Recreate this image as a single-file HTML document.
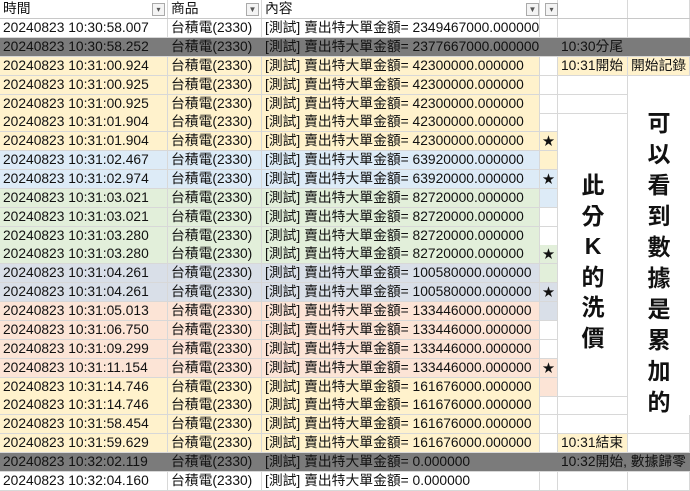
<!DOCTYPE html>
<html><head><meta charset="utf-8"><style>
*{margin:0;padding:0;box-sizing:border-box}
body{width:690px;height:491px;background:#fff;position:relative;overflow:hidden;font-family:"Liberation Sans","Noto Sans CJK TC",sans-serif;font-size:13.8px;color:#111}
.r{position:absolute;left:0;width:690px;height:19px;border-bottom:1px solid #d8d8d8}
.c{position:absolute;top:0;height:100%;line-height:18px;white-space:nowrap;border-right:1px solid #d8d8d8;padding-left:3px}
.a{left:0;width:168px}.b{left:168px;width:94px}.cc{left:262px;width:278px}.d{left:540px;width:18px;text-align:center;padding:0;font-size:12px}.e{left:558px;width:70px}.f{left:628px;width:62px}
.Y{background:#fff2cc}.B{background:#ddebf7}.G{background:#e2efda}.GB{background:#d9dfe8}.P{background:#fce4d6}.K{background:#7b7b7b;border-right-color:#7b7b7b}
.big{position:absolute;font-weight:bold;font-size:23px;text-align:center;line-height:30.5px;color:#111}
.fb{position:absolute;top:3px;width:13px;height:13px;border:1px solid #aaa;background:#f4f4f4;font-size:8px;line-height:11px;text-align:center;color:#555}
</style></head><body>
<div class="r" style="top:0;height:19px;border-bottom:1px solid #c8c8c8">
<div class="c a">時間</div><div class="c b">商品</div><div class="c cc">內容</div><div class="c d"></div><div class="c e"></div><div class="c f"></div>
<span class="fb" style="left:152px">▾</span><span class="fb" style="left:246px">▼</span><span class="fb" style="left:526px">▼</span><span class="fb" style="left:545px">▾</span>
</div>
<div class="r" style="top:19px"><div class="c a">20240823 10:30:58.007</div><div class="c b">台積電(2330)</div><div class="c cc">[測試] 賣出特大單金額= 2349467000.000000</div><div class="c d"></div><div class="c e"></div><div class="c f"></div></div>
<div class="r K" style="top:38px"><div class="c a K">20240823 10:30:58.252</div><div class="c b K">台積電(2330)</div><div class="c cc K">[測試] 賣出特大單金額= 2377667000.000000</div><div class="c d K"></div><div class="c e K" style="width:132px">10:30分尾</div></div>
<div class="r" style="top:57px"><div class="c a Y">20240823 10:31:00.924</div><div class="c b Y">台積電(2330)</div><div class="c cc Y">[測試] 賣出特大單金額= 42300000.000000</div><div class="c d"></div><div class="c e Y">10:31開始</div><div class="c f Y">開始記錄</div></div>
<div class="r" style="top:75.6px"><div class="c a Y">20240823 10:31:00.925</div><div class="c b Y">台積電(2330)</div><div class="c cc Y">[測試] 賣出特大單金額= 42300000.000000</div><div class="c d"></div><div class="c e"></div><div class="c f"></div></div>
<div class="r" style="top:94.5px"><div class="c a Y">20240823 10:31:00.925</div><div class="c b Y">台積電(2330)</div><div class="c cc Y">[測試] 賣出特大單金額= 42300000.000000</div><div class="c d"></div><div class="c e"></div><div class="c f" style="border-bottom:none"></div></div>
<div class="r" style="top:113.4px"><div class="c a Y">20240823 10:31:01.904</div><div class="c b Y">台積電(2330)</div><div class="c cc Y">[測試] 賣出特大單金額= 42300000.000000</div><div class="c d"></div><div class="c e"></div></div>
<div class="r" style="top:132.2px"><div class="c a Y">20240823 10:31:01.904</div><div class="c b Y">台積電(2330)</div><div class="c cc Y">[測試] 賣出特大單金額= 42300000.000000</div><div class="c d Y">★</div></div>
<div class="r" style="top:151.1px"><div class="c a B">20240823 10:31:02.467</div><div class="c b B">台積電(2330)</div><div class="c cc B">[測試] 賣出特大單金額= 63920000.000000</div><div class="c d Y"></div></div>
<div class="r" style="top:170px"><div class="c a B">20240823 10:31:02.974</div><div class="c b B">台積電(2330)</div><div class="c cc B">[測試] 賣出特大單金額= 63920000.000000</div><div class="c d B">★</div></div>
<div class="r" style="top:188.8px"><div class="c a G">20240823 10:31:03.021</div><div class="c b G">台積電(2330)</div><div class="c cc G">[測試] 賣出特大單金額= 82720000.000000</div><div class="c d B"></div></div>
<div class="r" style="top:207.7px"><div class="c a G">20240823 10:31:03.021</div><div class="c b G">台積電(2330)</div><div class="c cc G">[測試] 賣出特大單金額= 82720000.000000</div><div class="c d"></div></div>
<div class="r" style="top:226.6px"><div class="c a G">20240823 10:31:03.280</div><div class="c b G">台積電(2330)</div><div class="c cc G">[測試] 賣出特大單金額= 82720000.000000</div><div class="c d"></div></div>
<div class="r" style="top:245.4px"><div class="c a G">20240823 10:31:03.280</div><div class="c b G">台積電(2330)</div><div class="c cc G">[測試] 賣出特大單金額= 82720000.000000</div><div class="c d G">★</div></div>
<div class="r" style="top:264.3px"><div class="c a GB">20240823 10:31:04.261</div><div class="c b GB">台積電(2330)</div><div class="c cc GB">[測試] 賣出特大單金額= 100580000.000000</div><div class="c d G"></div></div>
<div class="r" style="top:283.2px"><div class="c a GB">20240823 10:31:04.261</div><div class="c b GB">台積電(2330)</div><div class="c cc GB">[測試] 賣出特大單金額= 100580000.000000</div><div class="c d GB">★</div></div>
<div class="r" style="top:302px"><div class="c a P">20240823 10:31:05.013</div><div class="c b P">台積電(2330)</div><div class="c cc P">[測試] 賣出特大單金額= 133446000.000000</div><div class="c d GB"></div></div>
<div class="r" style="top:320.9px"><div class="c a P">20240823 10:31:06.750</div><div class="c b P">台積電(2330)</div><div class="c cc P">[測試] 賣出特大單金額= 133446000.000000</div><div class="c d"></div></div>
<div class="r" style="top:339.8px"><div class="c a P">20240823 10:31:09.299</div><div class="c b P">台積電(2330)</div><div class="c cc P">[測試] 賣出特大單金額= 133446000.000000</div><div class="c d"></div></div>
<div class="r" style="top:358.6px"><div class="c a P">20240823 10:31:11.154</div><div class="c b P">台積電(2330)</div><div class="c cc P">[測試] 賣出特大單金額= 133446000.000000</div><div class="c d P">★</div></div>
<div class="r" style="top:377.5px"><div class="c a Y">20240823 10:31:14.746</div><div class="c b Y">台積電(2330)</div><div class="c cc Y">[測試] 賣出特大單金額= 161676000.000000</div><div class="c d P"></div></div>
<div class="r" style="top:396.4px"><div class="c a Y">20240823 10:31:14.746</div><div class="c b Y">台積電(2330)</div><div class="c cc Y">[測試] 賣出特大單金額= 161676000.000000</div><div class="c d"></div><div class="c e"></div></div>
<div class="r" style="top:415.2px"><div class="c a Y">20240823 10:31:58.454</div><div class="c b Y">台積電(2330)</div><div class="c cc Y">[測試] 賣出特大單金額= 161676000.000000</div><div class="c d"></div><div class="c e"></div><div class="c f"></div></div>
<div class="r" style="top:434.1px"><div class="c a Y">20240823 10:31:59.629</div><div class="c b Y">台積電(2330)</div><div class="c cc Y">[測試] 賣出特大單金額= 161676000.000000</div><div class="c d"></div><div class="c e Y">10:31結束</div><div class="c f"></div></div>
<div class="r K" style="top:453px"><div class="c a K">20240823 10:32:02.119</div><div class="c b K">台積電(2330)</div><div class="c cc K">[測試] 賣出特大單金額= 0.000000</div><div class="c d K"></div><div class="c e K" style="width:132px">10:32開始, 數據歸零</div></div>
<div class="r" style="top:472px"><div class="c a">20240823 10:32:04.160</div><div class="c b">台積電(2330)</div><div class="c cc">[測試] 賣出特大單金額= 0.000000</div><div class="c d"></div><div class="c e"></div><div class="c f"></div></div>
<div style="position:absolute;left:558px;top:114px;width:70px;height:282px;background:#fff;border-right:1px solid #d8d8d8"></div>
<div style="position:absolute;left:628px;top:76px;width:62px;height:339px;background:#fff"></div>
<div class="big" style="left:558px;width:70px;top:170px">此<br>分<br>K<br>的<br>洗<br>價</div>
<div class="big" style="left:628px;width:62px;top:108px;line-height:31px">可<br>以<br>看<br>到<br>數<br>據<br>是<br>累<br>加<br>的</div>
</body></html>
